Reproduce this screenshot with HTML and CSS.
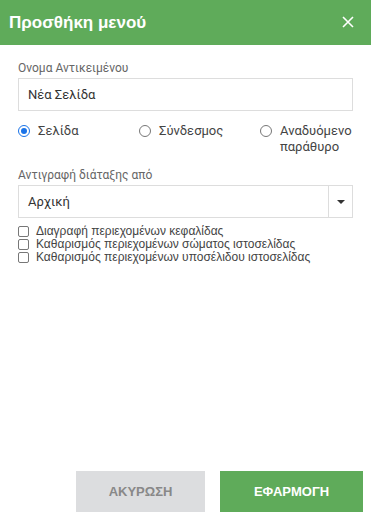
FILE: index.html
```html
<!DOCTYPE html>
<html lang="el">
<head>
  <meta charset="UTF-8">
  <meta name="viewport" content="width=device-width, initial-scale=1.0">
  <title>Προσθήκη μενού</title>
  <link rel="stylesheet" href="styles.css">
</head>
<body>
  <div class="dialog">
    <!-- Header -->
    <div class="dialog-header">
      <h1>Προσθήκη μενού</h1>
      <span class="close">
        <svg width="12" height="12" viewBox="0 0 12 12">
          <path d="M1 1 L11 11 M11 1 L1 11" stroke="#fff" stroke-width="1.6" fill="none"/>
        </svg>
      </span>
    </div>

    <!-- Body -->
    <div class="dialog-body">
      <label class="field-label">Ονομα Αντικειμένου</label>
      <div class="text-input">Νέα Σελίδα</div>

      <div class="radio-row">
        <div class="radio-item">
          <span class="radio checked"></span>
          <span>Σελίδα</span>
        </div>
        <div class="radio-item">
          <span class="radio"></span>
          <span>Σύνδεσμος</span>
        </div>
        <div class="radio-item">
          <span class="radio"></span>
          <span>Αναδυόμενο<br>παράθυρο</span>
        </div>
      </div>

      <label class="field-label">Αντιγραφή διάταξης από</label>
      <div class="select">
        <span class="select-value">Αρχική</span>
        <span class="select-arrow"></span>
      </div>

      <div class="checks">
        <div class="check-item"><span class="checkbox"></span>Διαγραφή περιεχομένων κεφαλίδας</div>
        <div class="check-item"><span class="checkbox"></span>Καθαρισμός περιεχομένων σώματος ιστοσελίδας</div>
        <div class="check-item"><span class="checkbox"></span>Καθαρισμός περιεχομένων υποσέλιδου ιστοσελίδας</div>
      </div>
    </div>

    <!-- Footer -->
    <div class="dialog-footer">
      <button class="btn btn-cancel">ΑΚΥΡΩΣΗ</button>
      <button class="btn btn-apply">ΕΦΑΡΜΟΓΗ</button>
    </div>
  </div>
</body>
</html>
```

FILE: styles.css
```css
/* General */
body {
  margin: 0;
  padding: 0;
  font-family: Roboto, "Liberation Sans", sans-serif;
  background-color: #fff;
}

.dialog {
  display: flex;
  flex-direction: column;
  height: 523px;
  width: 371px;
}

/* Header */
.dialog-header {
  height: 45px;
  background-color: #5fab5a;
  display: flex;
  align-items: center;
  justify-content: space-between;
  padding: 0 17px 0 9px;
  flex-shrink: 0;
}

.dialog-header h1 {
  margin: 0;
  font-family: "Liberation Sans", Arial, sans-serif;
  font-size: 17px;
  font-weight: bold;
  color: #fff;
}

.close {
  display: flex;
  margin-top: -1px;
}

/* Body */
.dialog-body {
  flex: 1;
  padding: 16px 18px 0 18px;
}

.field-label {
  display: block;
  font-size: 12px;
  color: #666;
  line-height: 14px;
  margin-bottom: 3px;
}

.text-input,
.select {
  height: 31px;
  border: 1px solid #ddd;
  box-sizing: border-box;
  height: 33px;
  font-size: 13px;
  color: #333;
  display: flex;
  align-items: center;
}

.text-input {
  padding-left: 9px;
}

/* Radios */
.radio-row {
  display: flex;
  margin: 12px 0 13px 0;
  font-size: 13px;
  color: #444;
  line-height: 16px;
}

.radio-item {
  display: flex;
  align-items: flex-start;
  width: 121px;
}

.radio-item:last-child {
  width: auto;
}

.radio {
  width: 10px;
  height: 10px;
  border: 1px solid #777;
  border-radius: 50%;
  margin: 2px 8px 0 0;
  flex-shrink: 0;
  position: relative;
  box-sizing: content-box;
}

.radio.checked {
  border-color: #1a73e8;
}

.radio.checked::after {
  content: "";
  position: absolute;
  top: 2px;
  left: 2px;
  width: 6px;
  height: 6px;
  border-radius: 50%;
  background-color: #1a73e8;
}

/* Select */
.select {
  justify-content: space-between;
}

.select-value {
  padding-left: 9px;
}

.select-arrow {
  width: 23px;
  height: 100%;
  border-left: 1px solid #ddd;
  display: flex;
  align-items: center;
  justify-content: center;
}

.select-arrow::after {
  content: "";
  border-left: 4px solid transparent;
  border-right: 4px solid transparent;
  border-top: 4px solid #333;
}

/* Checkboxes */
.checks {
  margin-top: 7px;
  font-family: "Liberation Sans", Arial, sans-serif;
  font-size: 12px;
  color: #444;
  line-height: 13px;
}

.check-item {
  display: flex;
  align-items: center;
}

.checkbox {
  width: 9px;
  height: 9px;
  border: 1px solid #777;
  border-radius: 2px;
  margin-right: 7px;
  box-sizing: content-box;
}

/* Footer */
.dialog-footer {
  display: flex;
  justify-content: flex-end;
  gap: 15px;
  padding: 0 8px 11px 0;
}

.btn {
  height: 41px;
  border: none;
  font-family: "Liberation Sans", Arial, sans-serif;
  font-size: 13px;
  font-weight: bold;
  cursor: pointer;
}

.btn-cancel {
  width: 129px;
  background-color: #dcdddf;
  color: #888;
}

.btn-apply {
  width: 143px;
  background-color: #5fab5a;
  color: #fff;
}
```
